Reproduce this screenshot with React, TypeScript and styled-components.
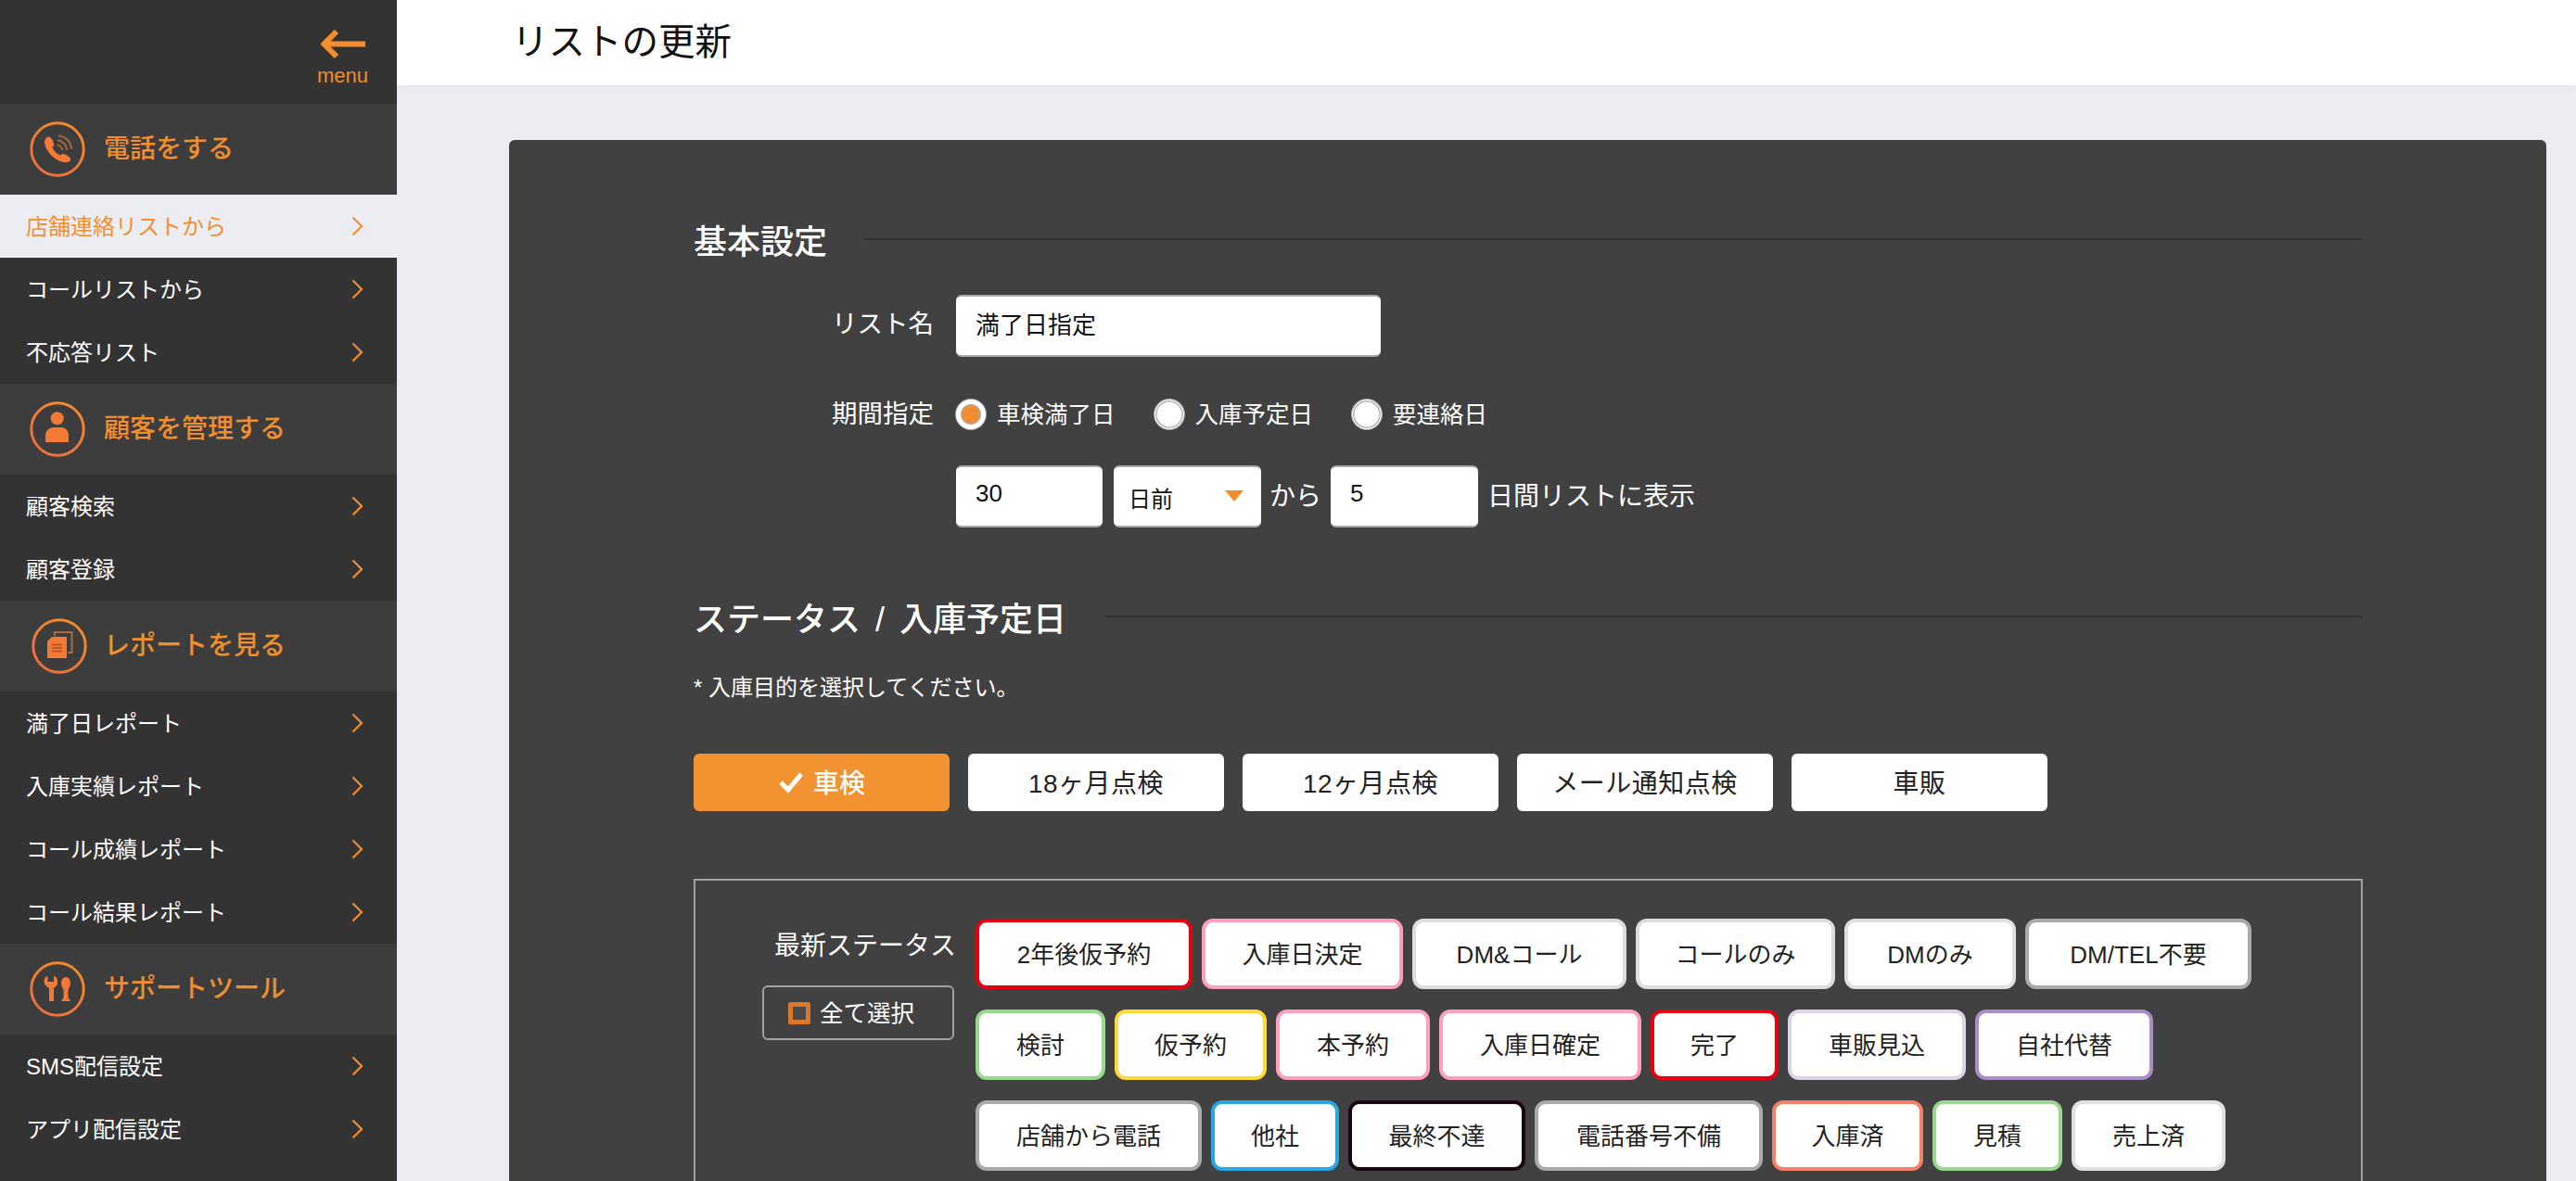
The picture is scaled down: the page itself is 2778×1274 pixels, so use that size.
import React from "react";
import styled, { createGlobalStyle } from "styled-components";

const FONT = `"Liberation Sans", "Noto Sans CJK JP", sans-serif`;
const ORANGE = "#f28e2e";

const Global = createGlobalStyle`
  html, body { margin: 0; padding: 0; height: 100%; overflow: hidden; background: #ecedf2; }
  * { box-sizing: border-box; }
  body { font-family: ${FONT}; }
`;

const Page = styled.div`
  display: flex;
  width: 100vw;
  height: 100vh;
  overflow: hidden;
  background: #ecedf2;
`;

const Sidebar = styled.nav`
  flex: 0 0 428px;
  height: 100%;
  background: #333333;
  overflow: hidden;
`;

const MenuToggle = styled.div`
  height: 112px;
  display: flex;
  flex-direction: column;
  align-items: flex-end;
  padding: 32px 31px 0 0;
  color: ${ORANGE};
`;

const MenuLabel = styled.span`
  font-size: 22px;
  line-height: 22px;
  margin-top: 7px;
`;

const ArrowIcon = styled.svg`
  display: block;
  width: 48px;
  height: 32px;
  margin-right: 3px;
`;

const SectionHeader = styled.div<{ $offset?: number }>`
  height: 98px;
  background: #3d3d3d;
  display: flex;
  align-items: center;
  padding-left: ${(p) => 32 + (p.$offset ?? 0)}px;
  gap: ${(p) => 20 - (p.$offset ?? 0)}px;
  color: ${ORANGE};
  font-size: 28px;
  font-weight: 500;
`;

const SectionTitle = styled.span`
  line-height: 40px;
  margin-top: -1px;
`;

const SideIcon = styled.svg`
  width: 60px;
  height: 60px;
  flex: none;
`;

const NavRow = styled.div<{ $active?: boolean }>`
  height: 68px;
  display: flex;
  align-items: center;
  justify-content: space-between;
  padding: 0 36px 0 28px;
  font-size: 24px;
  color: ${(p) => (p.$active ? ORANGE : "#ffffff")};
  background: ${(p) => (p.$active ? "#ecedf2" : "transparent")};
`;

const NavLabel = styled.span`
  margin-top: -3px;
`;

const Chevron = styled.svg`
  width: 13px;
  height: 22px;
  flex: none;
`;

const Main = styled.main`
  flex: 1;
  min-width: 0;
  height: 100%;
  overflow: hidden;
`;

const TopBar = styled.header`
  height: 92px;
  background: #ffffff;
  display: flex;
  align-items: center;
  padding: 0 0 10px 124px;
  font-size: 39.5px;
  color: #111111;
  box-shadow: 0 2px 10px rgba(0, 0, 0, 0.04);
`;

const Content = styled.div`
  padding: 59px 32px 0 121px;
`;

const Card = styled.section`
  background: #414141;
  border-radius: 6px;
  padding: 82px 198px 60px 199px;
  color: #ffffff;
`;

const Heading = styled.div<{ $gap: number; $top?: number }>`
  display: flex;
  align-items: center;
  gap: ${(p) => p.$gap}px;
  height: 50px;
  font-size: 36px;
  font-weight: 500;
  word-spacing: 6px;
  margin-top: ${(p) => p.$top ?? 0}px;
  &::after {
    content: "";
    flex: 1;
    height: 2px;
    background: #333333;
  }
`;

const FormRow = styled.div<{ $top: number }>`
  display: flex;
  align-items: center;
  margin-top: ${(p) => p.$top}px;
`;

const FieldLabel = styled.div<{ $lift?: number }>`
  flex: 0 0 259px;
  margin: ${(p) => -(p.$lift ?? 0)}px 24px 0 0;
  text-align: right;
  font-size: 27.5px;
  line-height: 40px;
`;

const TextInput = styled.input<{ $w: number }>`
  width: ${(p) => p.$w}px;
  height: 67px;
  padding: 0 0 6px 21px;
  border: 0;
  border-top: 2px solid #aaaaaa;
  border-bottom: 2px solid #aaaaaa;
  border-radius: 6px;
  background: #ffffff;
  color: #111111;
  font-family: ${FONT};
  font-size: 26px;
  outline: none;
`;

const RadioGroup = styled.label`
  display: flex;
  align-items: center;
  gap: 12px;
  font-size: 25.5px;
  line-height: 40px;
  margin-right: 42px;
`;

const RadioDot = styled.span<{ $on?: boolean }>`
  width: 32px;
  height: 32px;
  border-radius: 50%;
  background: ${(p) => (p.$on ? ORANGE : "#ffffff")};
  border: ${(p) => (p.$on ? "5px solid #ffffff" : "1px solid #ffffff")};
  box-shadow: 0 0 0 1.5px #aaaaaa inset, 0 0 0 1px #aaaaaa;
`;

const Select = styled.div`
  width: 159px;
  height: 67px;
  margin-left: 12px;
  display: flex;
  align-items: center;
  justify-content: space-between;
  padding: 2px 19px 0 16px;
  border-top: 2px solid #aaaaaa;
  border-bottom: 2px solid #aaaaaa;
  border-radius: 6px;
  background: #ffffff;
  color: #111111;
  font-size: 24px;
  &::after {
    content: "";
    margin-top: -3px;
    border-left: 10px solid transparent;
    border-right: 10px solid transparent;
    border-top: 12px solid ${ORANGE};
  }
`;

const InlineText = styled.span<{ $l: number; $r: number }>`
  font-size: 28px;
  margin: -6px ${(p) => p.$r}px 0 ${(p) => p.$l}px;
`;

const Note = styled.p`
  margin: 32px 0 0;
  font-size: 24px;
  line-height: 40px;
`;

const PurposeRow = styled.div`
  display: flex;
  gap: 20px;
  margin-top: 51px;
`;

const PurposeChip = styled.div<{ $on?: boolean }>`
  flex: 0 0 276px;
  height: 62px;
  display: flex;
  align-items: center;
  justify-content: center;
  gap: 10px;
  padding-bottom: 2px;
  border-radius: 6px;
  font-size: 28px;
  letter-spacing: ${(p) => (p.$on ? 0 : 0.5)}px;
  font-weight: ${(p) => (p.$on ? 500 : 400)};
  background: ${(p) => (p.$on ? "#f39231" : "#ffffff")};
  color: ${(p) => (p.$on ? "#ffffff" : "#222222")};
`;

const CheckIcon = styled.svg`
  width: 28px;
  height: 24px;
  margin-top: 2px;
`;

const StatusBox = styled.div`
  margin-top: 73px;
  border: 2px solid #a0a0a0;
  padding: 41px 0 60px;
  display: flex;
  gap: 23px;
`;

const StatusLeft = styled.div`
  flex: 0 0 279px;
  display: flex;
  flex-direction: column;
  align-items: flex-end;
`;

const StatusLabel = styled.div`
  font-size: 28px;
  line-height: 60px;
  margin-right: -2px;
`;

const SelectAll = styled.div`
  width: 207px;
  height: 59px;
  margin-top: 12px;
  display: flex;
  align-items: center;
  gap: 10px;
  padding: 0 0 4px 26px;
  border: 2px solid #a0a0a0;
  border-radius: 6px;
  font-size: 25.5px;
`;

const SquareBox = styled.span`
  width: 24px;
  height: 24px;
  margin-top: 4px;
  border: 5px solid #d9772a;
  border-radius: 2px;
  background: #4a4a4a;
`;

const StatusRows = styled.div`
  display: flex;
  flex-direction: column;
  gap: 22px;
`;

const StatusRow = styled.div`
  display: flex;
  gap: 10px;
`;

const StatusChip = styled.div<{ $color: string; $w: number }>`
  flex: 0 0 ${(p) => p.$w}px;
  height: 76px;
  display: flex;
  align-items: center;
  justify-content: center;
  padding-bottom: 4px;
  border: 4px solid ${(p) => p.$color};
  border-radius: 12px;
  background: #ffffff;
  color: #222222;
  font-size: 26px;
  white-space: nowrap;
`;

const PhoneGlyph = () => (
  <g>
    <path
      d="M19 17 C22 15 25 20 26 24 C27 26 25 27 24.5 28 C26 32 30 35.5 33 36.5 C34 35 36 34.5 38 35.5 C41 37 45 39 44 42 C42 45 37 44.5 33 43 C25 40 17 31 16 23 C16 20 17 18 19 17 Z"
      fill="#f47a35"
    />
    <path d="M31 15.5 A15 15 0 0 1 45 30" fill="none" stroke="#a5673a" strokeWidth="2" />
    <path d="M30 20.5 A10.5 10.5 0 0 1 40 31" fill="none" stroke="#a5673a" strokeWidth="2" />
    <path d="M29.5 25.5 A5.5 5.5 0 0 1 35 31" fill="none" stroke="#a5673a" strokeWidth="2" />
  </g>
);

const PersonGlyph = () => (
  <g fill="#f47a35">
    <circle cx="29.7" cy="18.3" r="7" />
    <path d="M17 44 V37 C17 31 22 28 26 28 H34 C38 28 42 31 42 37 V44 Z" />
  </g>
);

const DocsGlyph = () => (
  <g>
    <path d="M29 15 H43.5 V37 H39" fill="none" stroke="#b06a38" strokeWidth="2" />
    <path d="M25 19 V15 H30" fill="none" stroke="#b06a38" strokeWidth="2" />
    <path d="M22 20 H38 V43 H17 V25 Z" fill="#f47a35" />
    <path d="M22 28.5 H33 M22 32 H33 M22 35.5 H33" stroke="#a84e25" strokeWidth="1.6" />
  </g>
);

const ToolsGlyph = () => (
  <g fill="#f47a35">
    <path d="M17 17 L19.5 16 V22 H26 V16 L28.5 17 C31 21 31 26 26 29 V43 H21 V29 C15 26 14.5 21 17 17 Z" />
    <path d="M39 17 C42 17 44 20 44 24 C44 27 42 29 41.5 31 V39 L44 43 H34 L36.5 39 V31 C36 29 34 27 34 24 C34 20 36 17 39 17 Z" />
  </g>
);

const glyphs = { phone: PhoneGlyph, person: PersonGlyph, docs: DocsGlyph, tools: ToolsGlyph };

const CircleIcon: React.FC<{ kind: keyof typeof glyphs }> = ({ kind }) => {
  const Glyph = glyphs[kind];
  return (
    <SideIcon viewBox="0 0 60 60">
      <defs>
        <linearGradient id={`ring-${kind}`} x1="0.8" y1="0" x2="0.2" y2="1">
          <stop offset="0" stopColor="#f28d2b" />
          <stop offset="1" stopColor="#ee6c3e" />
        </linearGradient>
      </defs>
      <circle cx="30" cy="30" r="28.2" fill="none" stroke={`url(#ring-${kind})`} strokeWidth="3" />
      <Glyph />
    </SideIcon>
  );
};

const ChevronRight = () => (
  <Chevron viewBox="0 0 13 22">
    <path d="M1.5 1.5 L11 11 L1.5 20.5" fill="none" stroke={ORANGE} strokeWidth="2.2" />
  </Chevron>
);

const nav: {
  title: string;
  icon: keyof typeof glyphs;
  offset?: number;
  items: { label: string; active?: boolean }[];
}[] = [
  {
    title: "電話をする",
    icon: "phone",
    items: [{ label: "店舗連絡リストから", active: true }, { label: "コールリストから" }, { label: "不応答リスト" }],
  },
  { title: "顧客を管理する", icon: "person", items: [{ label: "顧客検索" }, { label: "顧客登録" }] },
  {
    title: "レポートを見る",
    icon: "docs",
    offset: 2,
    items: [
      { label: "満了日レポート" },
      { label: "入庫実績レポート" },
      { label: "コール成績レポート" },
      { label: "コール結果レポート" },
    ],
  },
  { title: "サポートツール", icon: "tools", items: [{ label: "SMS配信設定" }, { label: "アプリ配信設定" }] },
];

const statusRows: [string, string, number][][] = [
  [
    ["2年後仮予約", "#e60012", 234],
    ["入庫日決定", "#ff9fc0", 217],
    ["DM&コール", "#dddddd", 231],
    ["コールのみ", "#dddddd", 215],
    ["DMのみ", "#e0e0e0", 185],
    ["DM/TEL不要", "#aaaaaa", 244],
  ],
  [
    ["検討", "#99d98f", 140],
    ["仮予約", "#ffd93b", 164],
    ["本予約", "#ff9fc0", 166],
    ["入庫日確定", "#ff9fc0", 218],
    ["完了", "#e60012", 138],
    ["車販見込", "#dcd3e8", 192],
    ["自社代替", "#ab8dc7", 192],
  ],
  [
    ["店舗から電話", "#aaaaaa", 244],
    ["他社", "#29a7e1", 138],
    ["最終不達", "#1a0612", 191],
    ["電話番号不備", "#aaaaaa", 246],
    ["入庫済", "#f6816b", 163],
    ["見積", "#99d98f", 140],
    ["売上済", "#e0e0e0", 166],
  ],
];

export default function App() {
  return (
    <Page>
      <Global />
      <Sidebar>
        <MenuToggle>
          <ArrowIcon viewBox="0 0 48 32">
            <path d="M48 15.5 H4 M17 2 L3.5 15.5 L17 29" fill="none" stroke={ORANGE} strokeWidth="6" />
          </ArrowIcon>
          <MenuLabel>menu</MenuLabel>
        </MenuToggle>
        {nav.map((section) => (
          <div key={section.title}>
            <SectionHeader $offset={section.offset}>
              <CircleIcon kind={section.icon} />
              <SectionTitle>{section.title}</SectionTitle>
            </SectionHeader>
            {section.items.map((item) => (
              <NavRow key={item.label} $active={item.active}>
                <NavLabel>{item.label}</NavLabel>
                <ChevronRight />
              </NavRow>
            ))}
          </div>
        ))}
      </Sidebar>
      <Main>
        <TopBar>リストの更新</TopBar>
        <Content>
          <Card>
            <Heading $gap={39}>基本設定</Heading>
            <FormRow $top={35}>
              <FieldLabel $lift={4}>リスト名</FieldLabel>
              <TextInput $w={458} defaultValue="満了日指定" />
            </FormRow>
            <FormRow $top={42}>
              <FieldLabel>期間指定</FieldLabel>
              <RadioGroup>
                <RadioDot $on />
                車検満了日
              </RadioGroup>
              <RadioGroup>
                <RadioDot />
                入庫予定日
              </RadioGroup>
              <RadioGroup>
                <RadioDot />
                要連絡日
              </RadioGroup>
            </FormRow>
            <FormRow $top={35}>
              <FieldLabel />
              <TextInput $w={158} defaultValue="30" />
              <Select>日前</Select>
              <InlineText $l={9} $r={10}>から</InlineText>
              <TextInput $w={159} defaultValue="5" />
              <InlineText $l={10} $r={0}>日間リストに表示</InlineText>
            </FormRow>
            <Heading $gap={42} $top={71}>ステータス / 入庫予定日</Heading>
            <Note>* 入庫目的を選択してください。</Note>
            <PurposeRow>
              <PurposeChip $on>
                <CheckIcon viewBox="0 0 28 24">
                  <path d="M3 12 L11 20 L25 3" fill="none" stroke="#ffffff" strokeWidth="5" />
                </CheckIcon>
                車検
              </PurposeChip>
              <PurposeChip>18ヶ月点検</PurposeChip>
              <PurposeChip>12ヶ月点検</PurposeChip>
              <PurposeChip>メール通知点検</PurposeChip>
              <PurposeChip>車販</PurposeChip>
            </PurposeRow>
            <StatusBox>
              <StatusLeft>
                <StatusLabel>最新ステータス</StatusLabel>
                <SelectAll>
                  <SquareBox />
                  全て選択
                </SelectAll>
              </StatusLeft>
              <StatusRows>
                {statusRows.map((row, i) => (
                  <StatusRow key={i}>
                    {row.map(([label, color, w]) => (
                      <StatusChip key={label} $color={color} $w={w}>
                        {label}
                      </StatusChip>
                    ))}
                  </StatusRow>
                ))}
              </StatusRows>
            </StatusBox>
          </Card>
        </Content>
      </Main>
    </Page>
  );
}
